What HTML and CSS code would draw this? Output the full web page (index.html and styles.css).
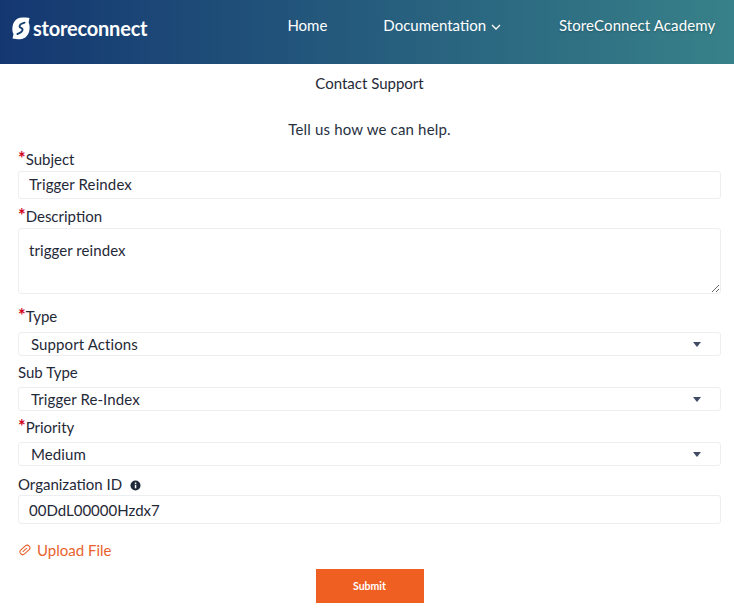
FILE: index.html
```html
<!DOCTYPE html>
<html lang="en">
<head>
<meta charset="utf-8">
<title>Contact Support</title>
<link rel="stylesheet" href="styles.css">
</head>
<body>
<header class="topbar">
  <a class="logo" href="#">
    <svg class="logo-mark" width="18" height="23" viewBox="0 0 18 23"><path fill="#fff" d="M17.5 1 L16.6 5.5 C17.4 7 17.8 9 17.6 11.5 C17.3 17.5 13.5 22.2 8 22.2 C5 22.2 2.5 22 0.5 21.5 L1.5 17 C0.6 15.5 0.2 13.5 0.4 11 C0.8 5 4.5 0.6 10 0.6 C13 0.6 15.5 0.6 17.5 1 Z"/><path fill="none" stroke="#17406f" stroke-width="1.9" stroke-linecap="round" d="M12.6 5.6 C9.6 6.4 7.4 8 7.6 9.6 C7.8 11.2 10.6 10.8 10.6 12.6 C10.6 14.4 8.4 16 5.4 17"/></svg>
    <span class="logo-text">storeconnect</span>
  </a>
  <nav class="nav">
    <a class="nav-home" href="#">Home</a>
    <a class="nav-docs" href="#">Documentation
      <svg class="chev" width="10" height="6" viewBox="0 0 10 6"><path d="M1 1l4 4 4-4" fill="none" stroke="#fff" stroke-width="1.3"/></svg>
    </a>
    <a class="nav-academy" href="#">StoreConnect Academy</a>
  </nav>
</header>
<main class="content">
  <h1 class="title">Contact Support</h1>
  <p class="intro">Tell us how we can help.</p>
  <form class="form">
    <label class="label label-subject"><span class="req">*</span>Subject</label>
    <input class="field" type="text" value="Trigger Reindex">
    <label class="label label-desc"><span class="req">*</span>Description</label>
    <textarea class="field area">trigger reindex</textarea>
    <label class="label label-type"><span class="req">*</span>Type</label>
    <div class="select-wrap"><select class="select"><option>Support Actions</option></select><span class="caret"></span></div>
    <label class="label label-sub">Sub Type</label>
    <div class="select-wrap"><select class="select"><option>Trigger Re-Index</option></select><span class="caret"></span></div>
    <label class="label label-sub"><span class="req">*</span>Priority</label>
    <div class="select-wrap"><select class="select"><option>Medium</option></select><span class="caret"></span></div>
    <label class="label label-org">Organization ID
      <svg class="info" width="11" height="11" viewBox="0 0 11 11"><circle cx="5.5" cy="5.5" r="5" fill="#1f2937"/><rect x="4.8" y="4.7" width="1.5" height="3.6" fill="#fff"/><rect x="4.8" y="2.5" width="1.5" height="1.4" fill="#fff"/></svg>
    </label>
    <input class="field org" type="text" value="00DdL00000Hzdx7">
    <a class="upload" href="#">
      <svg class="clip" width="12" height="12" viewBox="0 0 12 12"><g transform="rotate(-42 6 6)" fill="none" stroke="#e9622d" stroke-width="1.1"><rect x="0.3" y="3.2" width="11.4" height="5.4" rx="2.7"/><path d="M3 5.9h5.6"/></g></svg>
      Upload File
    </a>
    <div class="actions"><button class="submit" type="button">Submit</button></div>
  </form>
</main>
</body>
</html>
```
FILE: styles.css
```css
* { box-sizing: border-box; }
html, body { margin: 0; padding: 0; }
body {
  font-family: "Lato", "Noto Sans", sans-serif;
  font-size: 15px;
  color: #1f2937;
  background: #fff;
  height: 611px;
  overflow: hidden;
}
a { text-decoration: none; color: inherit; }
.topbar {
  height: 64px;
  display: flex;
  align-items: flex-start;
  background: linear-gradient(90deg, #143771 0%, #378189 100%);
  color: #fff;
}
.logo { display: flex; align-items: center; gap: 3px; margin: 17px 0 0 12px; height: 23px; }
.logo-text { font-weight: 700; font-size: 20px; letter-spacing: -0.2px; line-height: 23px; }
.nav { display: flex; font-size: 15px; line-height: 20px; padding-top: 15px; }
.nav-home { margin-left: 140px; }
.nav-docs { margin-left: 56px; }
.nav-academy { margin-left: 58px; letter-spacing: .1px; text-shadow: 0 1px 2px rgba(0,0,0,.25); white-space: nowrap; }
.chev { margin-left: 1px; vertical-align: middle; }
.content { padding: 0 13px 0 18px; }
.title {
  margin: 0;
  font-size: 15px;
  font-weight: 400;
  line-height: 20px;
  padding-top: 9px;
  text-align: center;
  color: #1f2937;
}
.intro { margin: 0; padding-top: 26px; line-height: 20px; text-align: center; letter-spacing: .17px; color: #27303f; }
.form { display: flex; flex-direction: column; }
.label { display: block; line-height: 20px; color: #1f2937; }
.label-subject { margin-top: 10px; height: 22px; }
.label-desc { margin-top: 7px; height: 22px; }
.label-type { margin-top: 12px; height: 26px; }
.label-sub { height: 25px; margin-top: 6px; }
.label-org { margin-top: 8px; height: 21px; }
.req { color: #d0021b; font-weight: 700; font-size: 18px; line-height: 0; }
.field {
  display: block;
  width: 703px;
  height: 28px;
  border: 1px solid #eceef1;
  border-radius: 3px;
  padding: 0 10px 2px;
  font: inherit;
  letter-spacing: .12px;
  color: #1f2937;
  background: #fff;
  outline: none;
}
.area { height: 66px; padding: 12px 10px 0; resize: vertical; margin: 0; letter-spacing: .07px; }
.org { height: 29px; letter-spacing: 0; padding-bottom: 0; }
.select-wrap { position: relative; width: 703px; height: 24px; }
.select {
  display: block;
  width: 100%;
  height: 24px;
  appearance: none;
  -webkit-appearance: none;
  border: 1px solid #eceef1;
  border-radius: 3px;
  padding: 0 12px;
  font: inherit;
  letter-spacing: .1px;
  color: #1f2937;
  background: #fff;
}
.caret {
  position: absolute;
  right: 20px;
  top: 10px;
  border-left: 4px solid transparent;
  border-right: 4px solid transparent;
  border-top: 5px solid #414b66;
}
.info { vertical-align: -1px; margin-left: 4px; }
.upload { display: flex; align-items: center; gap: 6px; color: #e9622d; line-height: 20px; margin-top: 16px; padding-left: 1px; }
.actions { display: flex; justify-content: center; margin-top: 9px; }
.submit {
  width: 108px;
  height: 34px;
  border: 0;
  background: #f05f22;
  color: #fff;
  font: 700 10.5px "Lato", sans-serif;
}
```
